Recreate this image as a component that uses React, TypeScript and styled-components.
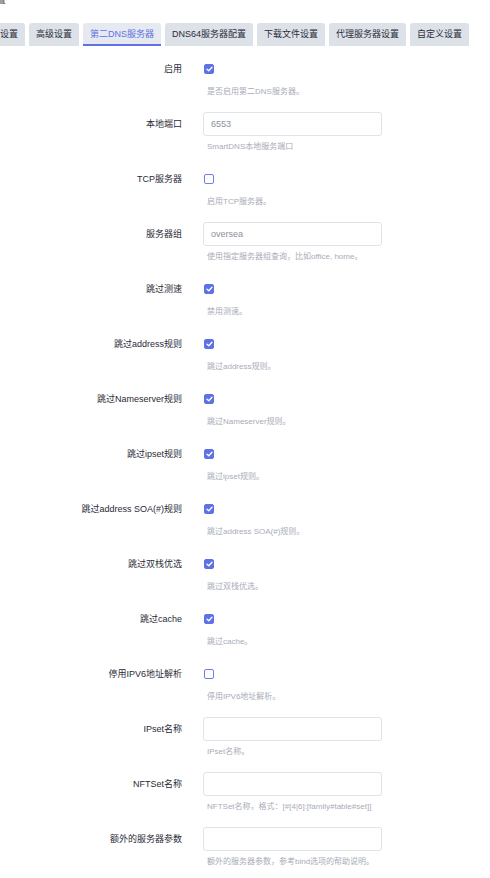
import React from "react";
import styled, { createGlobalStyle } from "styled-components";

const Global = createGlobalStyle`
  html, body { margin: 0; padding: 0; background: #fff; }
  body {
    font-family: "Liberation Sans", Arial, "Noto Sans CJK SC", sans-serif;
    color: #32325d;
    overflow: hidden;
  }
  * { box-sizing: border-box; }
`;

const Page = styled.div`
  width: 490px;
  min-height: 878px;
  background: #fff;
`;

const Crumb = styled.div`
  height: 6px;
  overflow: hidden;
  font-size: 9px;
  line-height: 12px;
  color: #555;
  & > span { display: block; margin-top: -6px; margin-left: -3px; }
`;

const TabBar = styled.div`
  display: flex;
  gap: 4px;
  margin-top: 17px;
  height: 23px;
  position: relative;
`;

const Tab = styled.div<{ $active?: boolean; $cut?: boolean }>`
  height: 23px;
  line-height: 23px;
  padding: 0 ${(p) => (p.$cut ? "7px 0 0" : "7px")};
  font-size: 9px;
  white-space: nowrap;
  background: ${(p) => (p.$active ? "#e6e9ef" : "#dde2e8")};
  color: ${(p) => (p.$active ? "#5e72e4" : "#2b2b3a")};
  border-radius: ${(p) => (p.$cut ? "0 3px 0 0" : "3px 3px 0 0")};
  box-shadow: ${(p) => (p.$active ? "inset 0 -2px 0 #5e72e4" : "none")};
`;

const Form = styled.div`
  margin-top: 11px;
  display: flex;
  flex-direction: column;
`;

const Row = styled.div`
  display: grid;
  grid-template-columns: 182px 179px;
  column-gap: 21px;
  margin-bottom: 14px;
`;

const Label = styled.div`
  height: 24px;
  line-height: 24px;
  font-size: 9px;
  text-align: right;
  color: #2a2a36;
  white-space: nowrap;
`;

const Control = styled.div`
  height: 24px;
  display: flex;
  align-items: center;
`;

const Box = styled.span<{ $checked?: boolean }>`
  width: 10px;
  height: 10px;
  margin-left: 1px;
  border-radius: 2px;
  display: inline-flex;
  align-items: center;
  justify-content: center;
  background: ${(p) => (p.$checked ? "#5e72e4" : "#fff")};
  border: 1px solid ${(p) => (p.$checked ? "#5e72e4" : "#6f7fe6")};
`;

const Input = styled.div`
  width: 179px;
  height: 24px;
  border: 1px solid #e1e3ea;
  border-radius: 3px;
  padding-left: 7px;
  display: flex;
  align-items: center;
  font-size: 9px;
  color: #8a8fa0;
  background: #fff;
`;

const Help = styled.div`
  grid-column: 2;
  margin-top: 5px;
  padding-left: 4px;
  height: 12px;
  line-height: 12px;
  font-size: 8px;
  color: #a9acb8;
  white-space: nowrap;
`;

const Check = () => (
  <svg width="7" height="6" viewBox="0 0 7 6">
    <path d="M1 3.2 L2.8 4.8 L6 1.2" stroke="#fff" strokeWidth="1.3" fill="none" strokeLinecap="round" strokeLinejoin="round" />
  </svg>
);

type Field =
  | { label: string; kind: "check"; checked: boolean; help: string }
  | { label: string; kind: "input"; value?: string; help: string };

const fields: Field[] = [
  { label: "启用", kind: "check", checked: true, help: "是否启用第二DNS服务器。" },
  { label: "本地端口", kind: "input", value: "6553", help: "SmartDNS本地服务端口" },
  { label: "TCP服务器", kind: "check", checked: false, help: "启用TCP服务器。" },
  { label: "服务器组", kind: "input", value: "oversea", help: "使用指定服务器组查询，比如office, home。" },
  { label: "跳过测速", kind: "check", checked: true, help: "禁用测速。" },
  { label: "跳过address规则", kind: "check", checked: true, help: "跳过address规则。" },
  { label: "跳过Nameserver规则", kind: "check", checked: true, help: "跳过Nameserver规则。" },
  { label: "跳过ipset规则", kind: "check", checked: true, help: "跳过ipset规则。" },
  { label: "跳过address SOA(#)规则", kind: "check", checked: true, help: "跳过address SOA(#)规则。" },
  { label: "跳过双栈优选", kind: "check", checked: true, help: "跳过双栈优选。" },
  { label: "跳过cache", kind: "check", checked: true, help: "跳过cache。" },
  { label: "停用IPV6地址解析", kind: "check", checked: false, help: "停用IPV6地址解析。" },
  { label: "IPset名称", kind: "input", help: "IPset名称。" },
  { label: "NFTSet名称", kind: "input", help: "NFTSet名称，格式：[#[4|6]:[family#table#set]]" },
  { label: "额外的服务器参数", kind: "input", help: "额外的服务器参数，参考bind选项的帮助说明。" },
];

const tabs = ["高级设置", "第二DNS服务器", "DNS64服务器配置", "下载文件设置", "代理服务器设置", "自定义设置"];

export default function App() {
  return (
    <Page>
      <Global />
      <Crumb>
        <span>置</span>
      </Crumb>
      <TabBar>
        <Tab $cut>设置</Tab>
        {tabs.map((t) => (
          <Tab key={t} $active={t === "第二DNS服务器"}>
            {t}
          </Tab>
        ))}
      </TabBar>
      <Form>
        {fields.map((f) => (
          <Row key={f.label}>
            <Label>{f.label}</Label>
            <Control>
              {f.kind === "check" ? (
                <Box $checked={f.checked}>{f.checked && <Check />}</Box>
              ) : (
                <Input>{f.value}</Input>
              )}
            </Control>
            <Help>{f.help}</Help>
          </Row>
        ))}
      </Form>
    </Page>
  );
}
